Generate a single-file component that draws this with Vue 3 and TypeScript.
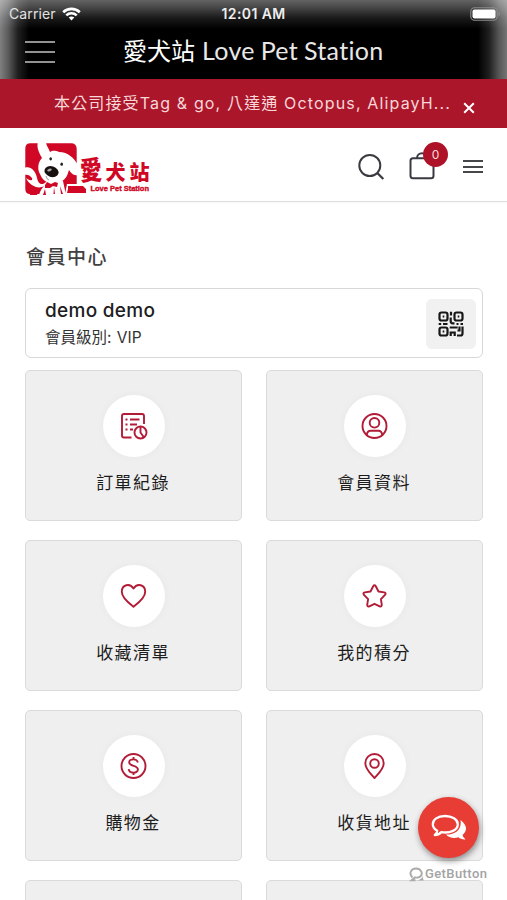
<script setup lang="ts">
interface Tile {
  label: string
  icon: string
}

const tiles: Tile[] = [
  { label: '訂單紀錄', icon: 'orders' },
  { label: '會員資料', icon: 'profile' },
  { label: '收藏清單', icon: 'heart' },
  { label: '我的積分', icon: 'star' },
  { label: '購物金', icon: 'credit' },
  { label: '收貨地址', icon: 'pin' },
  { label: '', icon: '' },
  { label: '', icon: '' },
]
const cartCount = 0
</script>

<template>
  <div class="screen">
    <header class="app-header">
      <div class="status">
        <div class="carrier">
          <span>Carrier</span>
          <svg width="19" height="14" viewBox="0 0 19 14" fill="none" stroke="#fff" stroke-width="2.6">
            <path d="M1.2 5.2C5.8.7 13.200.7 17.800 5.200" />
            <path d="M4.300 8.400c2.900-2.800 7.500-2.800 10.400 0" />
            <path d="M6.700 10.500c1.600-1.500 4-1.500 5.600 0L9.500 13.500z" fill="#fff" stroke="none" />
          </svg>
        </div>
        <span class="time">12:01 AM</span>
        <svg class="battery" width="31" height="14" viewBox="0 0 31 14">
          <rect x=".8" y=".8" width="26.400" height="12.400" rx="3.800" fill="none" stroke="#8c8c8c" stroke-width="1.100" />
          <rect x="2.500" y="2.500" width="23" height="9" rx="2" fill="#fff" />
          <path d="M28.500 4.800c1.900.7 1.900 3.700 0 4.400z" fill="#8c8c8c" />
        </svg>
      </div>
      <div class="title-row">
        <div class="burger"><i></i><i></i><i></i></div>
        <h1><span class="cjk">愛犬站</span><span class="latin">Love Pet Station</span></h1>
      </div>
    </header>

    <div class="notice">
      <p>本公司接受Tag &amp; go, 八達通 Octopus, AlipayH...</p>
      <svg width="12" height="12" viewBox="0 0 12 12" stroke="#fff" stroke-width="2"><path d="M1.200 1.200l9.600 9.600M10.800 1.200L1.200 10.800" /></svg>
    </div>

    <nav class="nav">
      <svg class="logo" width="130" height="53" viewBox="0 0 130 53">
        <path d="M5.500.3H46q5.700 0 5.700 5.700V41H42l-2 10H5Q.3 51 .3 46V5.500Q.3.3 5.500.3z" fill="#d00725" />
        <g fill="#fff">
          <path d="M13-1C11 5 15 11 17 15C13 19 12 26 15 31C17 36 20 39 25 40C34 42 41 37 43 30L44 27C47 32 51 33 53 32V22C49 15 43 9 34 9C29 7 27 8 25 9C23 4 21 2 21-1z" />
          <path d="M-1 25C6 22 11 29 12 35C13 41 17 43 21 39L38 38L41 52H14C15 48 17 45 19 43C13 47 4 42 1 35C5 38 8 38 7 35C5 32 2 31-1 32z" />
        </g>
        <path d="M4 47q5-3 10-1l-2 6H5zM20 42l2-3 4 2 4-2 3 1-1 4-4-1-3 2-5 0zM20 46l1 6h-3zM35 43l3 8h-2zM29 44l1 7h-1.500z" fill="#d00725" />
        <path d="M43 43h15l3 3v4H42l1-4z" fill="#d00725" />
        <ellipse cx="26.500" cy="28.600" rx="7.200" ry="5.300" transform="rotate(18 26.500 28.600)" fill="#17100f" />
        <ellipse cx="24.500" cy="27" rx="2.400" ry="1.200" transform="rotate(-20 24.500 27)" fill="#aaa" />
        <ellipse cx="25.700" cy="15.800" rx="1.300" ry="1.600" fill="#222" /><ellipse cx="36.700" cy="21.200" rx="1.300" ry="1.600" fill="#222" />
        <path d="M21 33q1 4 3 4" fill="none" stroke="#777" stroke-width=".7" />
        <g class="logo-cjk">
          <text x="55" y="0" font-size="22" transform="translate(0 37) rotate(-3 65 -8) scale(1 1.220)">愛</text>
          <text x="80.500" y="36.500" font-size="20">犬</text>
          <text x="104.500" y="36.500" font-size="20">站</text>
        </g>
        <text class="logo-latin" x="65.500" y="48.300" textLength="58.500" lengthAdjust="spacingAndGlyphs">Love Pet Station</text>
      </svg>
      <div class="actions">
        <svg width="28" height="28" viewBox="0 0 28 28" fill="none" stroke="#393b40" stroke-width="2"><circle cx="11.800" cy="12.500" r="10.500" /><path d="M19.300 20l6 6" stroke-width="2.300" /></svg>
        <div class="cart">
          <svg width="26" height="29" viewBox="0 0 26 29" fill="none" stroke="#393b40" stroke-width="2"><rect x="1.500" y="7.300" width="23" height="20" rx="2.500" /><path d="M8 7.300C8 .5 18 .5 18 7.300" /></svg>
          <span class="badge">{{ cartCount }}</span>
        </div>
        <div class="menu"><i></i><i></i><i></i></div>
      </div>
    </nav>

    <main>
      <h2>會員中心</h2>
      <section class="member">
        <div>
          <strong>demo demo</strong>
          <p>會員級別: <span class="tier">VIP</span></p>
        </div>
        <button class="qr" type="button">
          <svg width="26" height="26" viewBox="0 0 26 26" fill="none" stroke="#171717" stroke-width="2.200">
            <rect x="1.500" y="1.500" width="8" height="8" rx="2" /><rect x="16.500" y="1.500" width="8" height="8" rx="2" /><rect x="1.500" y="16.500" width="8" height="8" rx="2" />
            <path d="M4.700 5.500h1.600M19.700 5.500h1.600M4.700 20.500h1.600M13 .7v3.800M12.700 6.500v3.800q0 2 2 2h1.800M.7 13h2.500M5 13h4.500M18.500 13h2M22.500 13h2.500M11.700 16.500h8M12.700 25v-3.500h4V25M21.500 15.500v4h-2M24.500 15.500v7q0 2-2 2H19" />
          </svg>
        </button>
      </section>

      <section class="grid">
        <article v-for="(tile, index) in tiles" :key="index" class="tile">
          <template v-if="tile.label">
            <div class="disc">
              <svg width="30" height="30" viewBox="0 0 30 30" fill="none" stroke="#b21c37" stroke-width="1.900" stroke-linejoin="round">
                <template v-if="tile.icon === 'orders'">
                  <path d="M12.500 26.500H5q-2 0-2-2V5q0-2 2-2h18q2 0 2 2v8" />
                  <path d="M6.500 8.500h2M11 8.500h9.500M6.500 13.500h2M11 13.500h7M6.500 18.500h2M11 18.500h3" />
                  <circle cx="21.500" cy="21.500" r="6" /><path d="M21.500 15.500v6l3.500 5" />
                </template>
                <template v-else-if="tile.icon === 'profile'">
                  <circle cx="14.500" cy="15" r="12" /><circle cx="14.500" cy="11.800" r="4.800" /><path d="M6.700 24c.5-3.300 2-4.300 4-4.300h7.600c2 0 3.500 1 4 4.300" />
                </template>
                <path v-else-if="tile.icon === 'heart'" d="M14.500 25.800C11.500 23.400 2.800 17.200 2.800 10.800C2.800 3.500 10.800 1.700 14.500 7.500C18.200 1.700 26.200 3.500 26.200 10.800C26.200 17.200 17.500 23.400 14.500 25.800z" />
                <path v-else-if="tile.icon === 'star'" d="M13.200 5.200q1.300-2 2.600 0l2.700 5.300 5.700.9q2.300.6.8 2.500l-4.100 4.200.9 5.700q0 2.200-2.100 1.500L14.500 22.800l-5.200 2.500q-2.100.7-2.100-1.500l.9-5.700-4.100-4.200q-1.500-1.900.8-2.500l5.700-.9z" />
                <template v-else-if="tile.icon === 'credit'">
                  <circle cx="14.500" cy="15" r="12" /><path d="M18.800 11.500c-.8-4.200-8.600-4-8.600-.2 0 4.600 8.700 2.500 8.700 7.200 0 4.300-8.700 4.300-9.200-.3M14.500 6v2.500M14.500 21.500V24" />
                </template>
                <template v-else>
                  <path d="M14.500 27C10.500 22.500 5.300 18 5.300 12.200a9.200 9.200 0 0 1 18.400 0C23.700 18 18.500 22.500 14.500 27z" /><circle cx="14.500" cy="12.500" r="4.300" />
                </template>
              </svg>
            </div>
            <span class="label">{{ tile.label }}</span>
          </template>
        </article>
      </section>
    </main>

    <div class="chat">
      <svg width="36" height="28" viewBox="0 0 36 28">
        <path d="M29.500 6C37 12 36 17 31.500 21q.5 2.500 3 4.500c-3 .3-5.300-.8-7-2.200-5 1.400-10 .2-12.500-2.800C25 20.700 31 15 29.500 6z" fill="#fff" />
        <path d="M14 2C6.500 2 1.800 5.700 1.800 10.200c0 2.900 1.700 5 4.400 6.500 0 1.700-1 3.200-2.400 4.300 2.800 0 4.900-1.200 6.500-2.900C19.500 19.700 26.800 15.800 26.800 10.200 26.800 5.500 21 2 14 2z" fill="none" stroke="#fff" stroke-width="2.300" stroke-linejoin="round" />
      </svg>
    </div>
    <div class="credit">
      <svg width="16" height="15" viewBox="0 0 16 15" fill="none" stroke="#aaa" stroke-width="1.900"><path d="M3.500 10.500C-.5 6.500 2 1.500 7 1.500S14.300 6.500 11.500 9.200C10 10.700 8 10.900 6 10.300L2.500 13.300h4" /><path d="M14 8.500q-1.500 4.300-5.500 4.900h6.500l-1.200-2z" fill="#aaa" stroke="none" /></svg>
      <span>GetButton</span>
    </div>
  </div>
</template>

<style>
body {
  margin: 0;
  background: #fff;
}
</style>

<style scoped>
* {
  box-sizing: border-box;
}
h1, h2, p {
  margin: 0;
  font-weight: 400;
}
svg {
  display: block;
  flex: none;
}
.screen {
  position: relative;
  width: 507px;
  height: 900px;
  overflow: hidden;
  background: #fff;
  color: #222;
  font-family: "Inter", "Noto Sans CJK TC", sans-serif;
}
.app-header {
  height: 79px;
  color: #fff;
  background:
    linear-gradient(to bottom, rgba(255, 255, 255, .39), rgba(255, 255, 255, .27) 8px, rgba(255, 255, 255, .1) 18px, transparent 29px),
    linear-gradient(to right, rgba(255, 255, 255, .5), rgba(255, 255, 255, .36) 8px, rgba(255, 255, 255, .12) 18px, transparent 29px),
    linear-gradient(to left, rgba(255, 255, 255, .46), rgba(255, 255, 255, .34) 8px, rgba(255, 255, 255, .12) 18px, transparent 29px),
    #000;
}
.status {
  display: grid;
  grid-template-columns: 1fr auto 1fr;
  align-items: center;
  height: 27px;
  padding: 0 6px;
}
.carrier {
  display: flex;
  align-items: center;
  gap: 6px;
  padding-left: 3px;
  color: #e2e2e2;
  font-size: 14px;
  letter-spacing: .1px;
}
.time {
  font-size: 14px;
  font-weight: 600;
  letter-spacing: .4px;
  color: #eee;
}
.battery {
  justify-self: end;
}
.title-row {
  display: flex;
  align-items: center;
  height: 49px;
  padding-left: 25px;
}
.burger {
  display: grid;
  gap: 8px;
  width: 30px;
}
.burger i {
  height: 2px;
  background: #929292;
}
h1 {
  display: flex;
  align-items: center;
  gap: 7px;
  margin: -3px 0 0 68px;
  line-height: 36px;
  white-space: nowrap;
}
.cjk {
  font: 400 24px/36px "Noto Sans CJK TC", sans-serif;
}
.latin {
  font: 400 25px/36px "Lato", sans-serif;
  letter-spacing: .35px;
  word-spacing: -1px;
  color: #e8e8e8;
}
.notice {
  display: flex;
  align-items: center;
  height: 49px;
  padding: 0 31px 0 54px;
  background: #ab162b;
  color: #f7d7d8;
}
.notice p {
  width: 409px;
  margin-top: -3px;
  font-size: 16px;
  letter-spacing: 1.150px;
  white-space: nowrap;
}
.notice svg {
  margin-top: 8px;
}
.nav {
  display: flex;
  justify-content: space-between;
  height: 74px;
  padding: 15px 24px 0 25px;
  border-bottom: 1px solid #ddd;
  box-shadow: 0 1px 2px rgba(0, 0, 0, .04);
}
.logo-cjk {
  fill: #d00725;
  font-family: "Noto Sans CJK TC", sans-serif;
  font-weight: 900;
}
.logo-latin {
  fill: #d00725;
  stroke: #d00725;
  stroke-width: .4px;
  font: 700 8px "Liberation Sans", sans-serif;
}
.actions {
  display: flex;
  align-items: center;
  height: 47px;
}
.cart {
  position: relative;
  margin: 0 28px 0 23px;
}
.cart svg {
  margin-top: -3px;
}
.badge {
  position: absolute;
  left: 14px;
  top: -12px;
  width: 25px;
  height: 25px;
  border-radius: 50%;
  background: #ad1229;
  color: #f8dada;
  font-size: 12px;
  line-height: 25px;
  text-align: center;
}
.menu {
  display: grid;
  gap: 3.5px;
  width: 20px;
}
.menu i {
  height: 2px;
  background: #45474a;
}
main {
  padding: 39px 24px 0 25px;
}
h2 {
  height: 47px;
  padding-left: 1px;
  color: #414141;
  font: 500 19px/30px "Noto Sans CJK TC", sans-serif;
  letter-spacing: 1.5px;
}
.member {
  display: flex;
  justify-content: space-between;
  height: 70px;
  padding: 10px 6px 0 19px;
  border: 1px solid #d8d8d8;
  border-radius: 6px;
}
.member strong {
  display: block;
  color: #1d1d1d;
  font-size: 19px;
  font-weight: 500;
  letter-spacing: .3px;
  line-height: 24px;
}
.member p {
  color: #333;
  font-size: 15.500px;
  line-height: 29px;
}
.tier {
  margin-left: 1px;
}
.qr {
  display: grid;
  place-items: center;
  width: 50px;
  height: 50px;
  padding: 0;
  border: 0;
  border-radius: 6px;
  background: #f1f1f1;
}
.grid {
  display: grid;
  grid-template-columns: 217px 217px;
  grid-auto-rows: 151px;
  gap: 19px 24px;
  margin-top: 12px;
}
.tile {
  display: flex;
  flex-direction: column;
  align-items: center;
  padding-top: 24px;
  border: 1px solid #dadada;
  border-radius: 5px;
  background: #efefef;
}
.disc {
  display: grid;
  place-items: center;
  width: 62px;
  height: 62px;
  border-radius: 50%;
  background: #fff;
  box-shadow: 0 0 10px rgba(0, 0, 0, .035);
}
.label {
  margin-top: 12px;
  padding-right: 1px;
  color: #1c1c1c;
  font: 400 17px/26px "Noto Sans CJK TC", sans-serif;
  letter-spacing: 1.4px;
}
.chat {
  position: absolute;
  left: 418px;
  top: 797px;
  display: grid;
  place-items: center;
  width: 61px;
  height: 61px;
  border-radius: 50%;
  background: #e73d34;
  box-shadow: 1px 3px 6px rgba(0, 0, 0, .42);
}
.credit {
  position: absolute;
  left: 409px;
  top: 866px;
  display: flex;
  align-items: center;
  height: 16px;
  color: #a3a3a3;
  font: 500 13px/16px "Roboto", sans-serif;
  letter-spacing: .4px;
}
</style>
